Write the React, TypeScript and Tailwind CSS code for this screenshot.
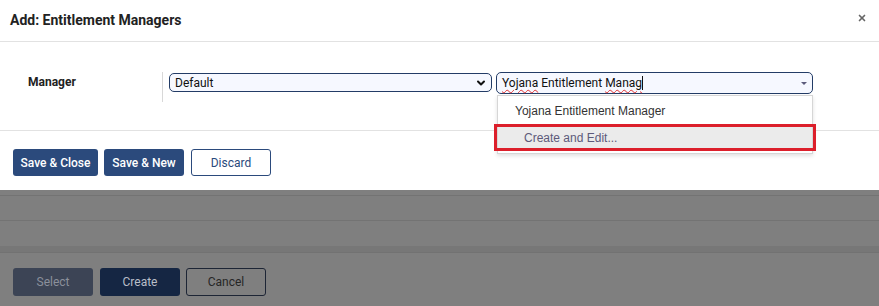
import React from 'react';
import { ChevronDown, X } from 'lucide-react';

const App: React.FC = () => {
  return (
    <div className="w-[879px] h-[306px] overflow-hidden bg-[#7f7f7f] font-['Roboto',sans-serif]">
      {/* Modal */}
      <div className="bg-white h-[190px] flex flex-col relative">
        {/* Header */}
        <div className="h-[42px] border-b border-[#e2e2e2] pl-[10px] pr-[12px] flex items-center justify-between">
          <h1 className="text-[14px] font-bold text-[#222]">Add: Entitlement Managers</h1>
          <X className="w-[10px] h-[10px] text-[#666] -mt-[6px]" strokeWidth={4} />
        </div>

        {/* Body */}
        <div className="h-[89px] border-b border-[#e2e2e2] pl-[28px] pt-[30px] flex items-start">
          <div className="w-[134px] text-[12px] font-bold text-[#222] pt-[1px]">Manager</div>
          <div className="border-l border-[#d8d8d8] h-[30px] pl-[6px] flex items-start gap-[4px]">
            <div className="w-[323px] h-[19px] mt-[1px] rounded-[5px] border border-[#233c66] bg-[#f6f8ff] flex items-center justify-between pl-[5px] pr-[4px]">
              <span className="text-[12px] text-[#111]">Default</span>
              <ChevronDown className="w-[12px] h-[12px] text-[#111]" strokeWidth={4} />
            </div>
            <div className="relative">
              <div className="w-[317px] h-[22px] rounded-[5px] border border-[#233c66] bg-[#f6f8ff] flex items-center justify-between pl-[5px] pr-[5px]">
                <span className="text-[12px] text-[#111] flex items-center">
                  <span className="underline decoration-wavy decoration-[#e03030] decoration-1 underline-offset-[2px]">Yojana</span>
                  <span>&nbsp;Entitlement&nbsp;</span>
                  <span className="underline decoration-wavy decoration-[#e03030] decoration-1 underline-offset-[2px]">Manag</span>
                  <span className="w-px h-[14px] bg-[#111]" />
                </span>
                <span className="w-0 h-0 border-l-[3px] border-r-[3px] border-t-[3px] border-l-transparent border-r-transparent border-t-[#5b5b7b]" />
              </div>
              {/* Dropdown */}
              <div className="absolute left-[1px] top-[23px] w-[316px] bg-white border border-[#d6d6d6] shadow-[0_2px_4px_rgba(0,0,0,0.12)] font-['Liberation_Sans',sans-serif] z-10 pb-[2px]">
                <div className="h-[28px] pl-[17px] pt-[2px] flex items-center text-[12px] text-[#333]">Yojana Entitlement Manager</div>
                <div className="relative h-[27px] -mx-[4px] border-[3px] border-[#dc1f2b]">
                  <div className="mx-[1px] h-full bg-[#ebebeb] pl-[26px] flex items-center text-[12px] text-[#5d5a7a]">Create and Edit...</div>
                </div>
              </div>
            </div>
          </div>
        </div>

        {/* Footer */}
        <div className="flex-1 pl-[13px] pt-[18px] flex items-start gap-[6px]">
          <button className="h-[27px] w-[85px] rounded-[3px] bg-[#2b4a7c] text-white text-[12px] font-medium">Save &amp; Close</button>
          <button className="h-[27px] w-[80px] rounded-[3px] bg-[#2b4a7c] text-white text-[12px] font-medium">Save &amp; New</button>
          <button className="h-[27px] w-[80px] ml-[1px] rounded-[3px] border border-[#2b4a7c] bg-white text-[#2b4a7c] text-[12px]">Discard</button>
        </div>
      </div>

      {/* Dimmed page behind */}
      <div className="h-[116px] flex flex-col">
        <div className="h-[6px] border-b border-[#737373]" />
        <div className="h-[25px] border-b border-[#737373]" />
        <div className="h-[25px]" />
        <div className="h-[7px] bg-[#777777] border-b border-[#727272]" />
        <div className="pl-[13px] pt-[15px] flex items-start">
          <button className="h-[28px] w-[80px] rounded-[3px] bg-[#3c4455] text-[#8b909b] text-[12px]">Select</button>
          <button className="h-[28px] w-[80px] ml-[7px] rounded-[3px] bg-[#152643] text-[#b9bec8] text-[12px]">Create</button>
          <button className="h-[28px] w-[80px] ml-[6px] rounded-[3px] border border-[#1d2535] text-[#262626] text-[12px]">Cancel</button>
        </div>
      </div>
    </div>
  );
};

export default App;
